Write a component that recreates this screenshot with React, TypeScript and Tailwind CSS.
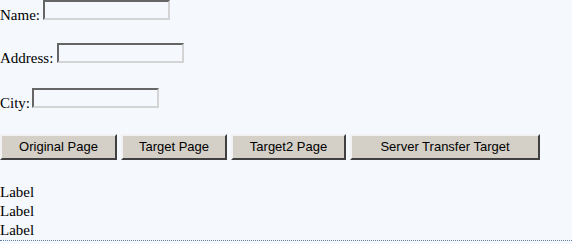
const serif = "font-['Liberation_Serif','Times_New_Roman',serif]";
const arial = "font-['Liberation_Sans',Arial,sans-serif]";

function Field({ label, w }: { label: string; w: string }) {
  return (
    <div className="flex items-end h-[20px]">
      <span className={`${w} text-[15px] leading-[15px] mb-[-3px] text-black ${serif}`}>{label}</span>
      <input
        type="text"
        className="w-[127px] h-[20px] bg-transparent border-2 border-t-[#666666] border-l-[#666666] border-r-[#d4d4d4] border-b-[#d4d4d4] outline-none"
      />
    </div>
  );
}

function Btn({ text, w }: { text: string; w: string }) {
  return (
    <button
      className={`${w} h-[26px] bg-[#d4d0c8] border-2 border-t-[#f2f2f2] border-l-[#f2f2f2] border-r-[#404040] border-b-[#404040] text-[13px] text-black ${arial}`}
    >
      {text}
    </button>
  );
}

export default function App() {
  return (
    <div className="w-[572px] h-[244px] bg-[#f5f9fe] overflow-hidden">
      <Field label="Name:" w="w-[43px]" />
      <div className="h-[23px]" />
      <Field label="Address:" w="w-[57px]" />
      <div className="h-[25px]" />
      <Field label="City:" w="w-[32px]" />
      <div className="h-[26px]" />
      <div className="flex gap-[4px]">
        <Btn text="Original Page" w="w-[117px]" />
        <Btn text="Target Page" w="w-[106px]" />
        <Btn text="Target2 Page" w="w-[115px]" />
        <Btn text="Server Transfer Target" w="w-[190px]" />
      </div>
      <div className={`mt-[23px] text-[15px] leading-[19px] text-black ${serif}`}>
        <div>Label</div>
        <div>Label</div>
        <div>Label</div>
      </div>
      <div className="border-b border-dotted border-[#5c7fa3]" />
    </div>
  );
}
